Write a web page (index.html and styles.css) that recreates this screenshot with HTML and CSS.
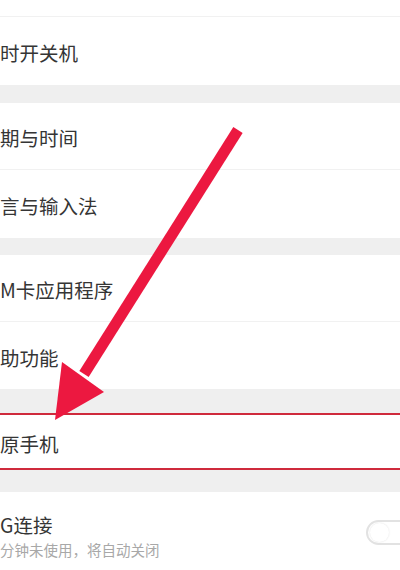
FILE: index.html
```html
<!DOCTYPE html>
<html lang="zh-CN">
<head>
  <meta charset="UTF-8" />
  <meta name="viewport" content="width=device-width, initial-scale=1.0"/>
  <title>设置</title>
  <link rel="stylesheet" href="styles.css">
</head>
<body>
  <div class="screen">
    <div class="row row-top"></div>
    <div class="row row-first"><span class="label">时开关机</span></div>

    <div class="gap"></div>
    <div class="group">
      <div class="row row-divided"><span class="label">期与时间</span></div>
      <div class="row row-tall"><span class="label">言与输入法</span></div>
    </div>

    <div class="gap gap-short"></div>
    <div class="group">
      <div class="row row-divided"><span class="label">M卡应用程序</span></div>
      <div class="row"><span class="label">助功能</span></div>
    </div>

    <div class="gap gap-wide"></div>
    <div class="row row-marked"><span class="label">原手机</span></div>

    <div class="gap gap-mid"></div>
    <div class="row row-otg">
      <div class="otg-text">
        <span class="label">G连接</span>
        <span class="sub">分钟未使用，将自动关闭</span>
      </div>
      <div class="switch"><div class="knob"></div></div>
    </div>

    <!-- annotation arrow drawn over the list -->
    <svg class="arrow" width="400" height="570" viewBox="0 0 400 570">
      <line x1="238" y1="130" x2="84" y2="374" stroke="#ec1840" stroke-width="11" />
      <polygon points="55,420 62,362 104,392" fill="#ec1840" />
    </svg>
  </div>
</body>
</html>
```

FILE: styles.css
```css
html, body {
  margin: 0;
  padding: 0;
  background: #fff;
  overflow: hidden;
}
.screen {
  position: relative;
  width: 400px;
  height: 570px;
  overflow: hidden;
  font-family: "Noto Sans CJK SC", "Noto Sans", sans-serif;
  color: #353535;
}
.row {
  display: flex;
  align-items: center;
  height: 67px;
  background: #fff;
  box-sizing: border-box;
}
.row-top {
  height: 17px;
  border-bottom: 1px solid #f1f1f1;
}
.row-first {
  height: 68px;
}
.row-divided {
  height: 67px;
  border-bottom: 1px solid #f1f1f1;
}
.row-tall {
  height: 68px;
}
.label {
  padding-top: 4px;
  font-size: 19.5px;
  line-height: 1;
  white-space: nowrap;
}
.gap {
  height: 18px;
  background: #efefef;
}
.gap-short {
  height: 17px;
}
.gap-wide {
  height: 24px;
}
.gap-mid {
  height: 22px;
}
.row-marked {
  height: 57px;
  border-top: 2px solid #cf2a3c;
  border-bottom: 2px solid #cf2a3c;
}
.row-otg {
  height: 80px;
  align-items: flex-start;
  justify-content: space-between;
}
.otg-text {
  display: flex;
  flex-direction: column;
  padding-top: 19px;
}
.sub {
  margin-top: 8px;
  font-size: 14.5px;
  line-height: 1;
  color: #a8a8a8;
  white-space: nowrap;
}
.switch {
  margin-top: 28px;
  margin-right: -14px;
  width: 48px;
  height: 25px;
  border: 2px solid #e2e2e2;
  border-radius: 14px;
  box-sizing: border-box;
  background: #fff;
  display: flex;
  align-items: center;
  padding-left: 2px;
}
.knob {
  width: 19px;
  height: 19px;
  border-radius: 50%;
  background: #fff;
  box-shadow: 0 0 2px rgba(0,0,0,0.12);
}
.arrow {
  position: absolute;
  left: 0;
  top: 0;
}
```
